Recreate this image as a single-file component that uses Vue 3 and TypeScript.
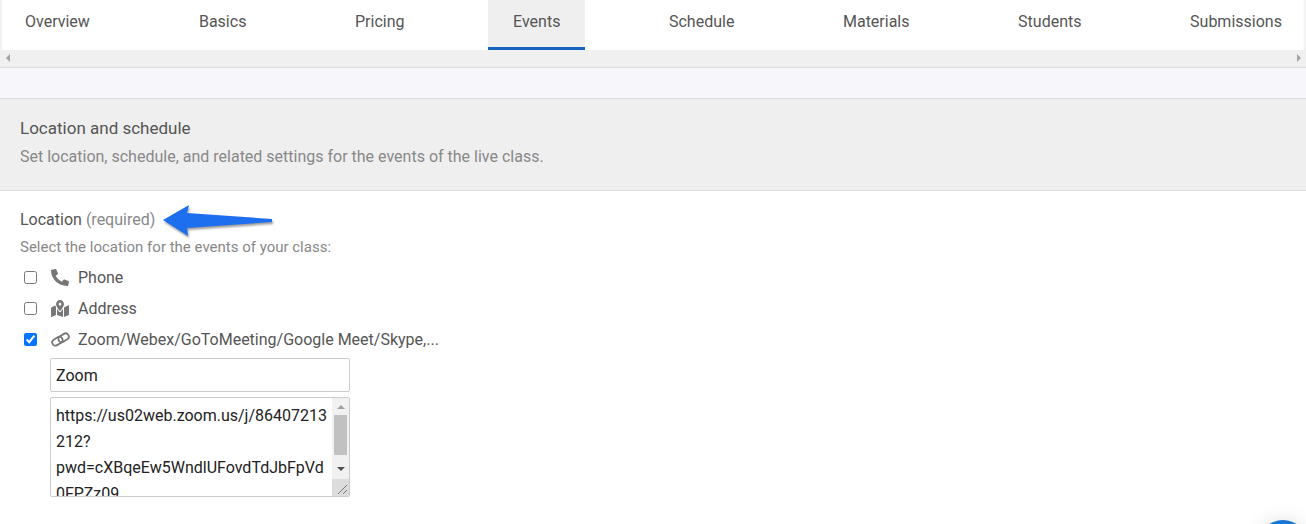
<script setup lang="ts">
import { ref } from 'vue'

const tabs = ['Overview', 'Basics', 'Pricing', 'Events', 'Schedule', 'Materials', 'Students', 'Submissions']
const activeTab = ref('Events')

const phonePath = 'M497.39 361.8l-112-48a24 24 0 0 0-28 6.9l-49.6 60.6A370.66 370.66 0 0 1 130.6 204.11l60.6-49.6a23.94 23.94 0 0 0 6.9-28l-48-112A24.16 24.16 0 0 0 122.6.61l-104 24A24 24 0 0 0 0 48c0 256.5 207.9 464 464 464a24 24 0 0 0 23.4-18.6l24-104a24.29 24.29 0 0 0-14.01-27.6z'
const mapPath = 'M288 0c-69.59 0-126 56.41-126 126 0 56.26 82.35 158.8 113.9 196.02 6.39 7.54 17.82 7.54 24.2 0C331.65 284.8 414 182.26 414 126 414 56.41 357.59 0 288 0zm0 168c-23.2 0-42-18.8-42-42s18.8-42 42-42 42 18.8 42 42-18.8 42-42 42zM20.12 215.95A32.006 32.006 0 0 0 0 245.66v250.32c0 11.32 11.43 19.06 21.94 14.86L160 448V214.92c-8.84-15.98-16.07-31.54-21.25-46.42L20.12 215.95zM288 359.67c-14.07 0-27.38-6.18-36.51-16.96-19.66-23.2-40.57-49.62-59.49-76.72V448l192 64V266c-18.92 27.09-39.82 53.52-59.49 76.72-9.13 10.77-22.44 16.95-36.51 16.95zm266.06-198.51L416 224v288l139.88-55.95A31.996 31.996 0 0 0 576 426.34V176.02c0-11.32-11.43-19.06-21.94-14.86z'

const locations = [
  { label: 'Phone', path: phonePath, box: '0 0 512 512', checked: false },
  { label: 'Address', path: mapPath, box: '0 0 576 512', checked: false },
  { label: 'Zoom/Webex/GoToMeeting/Google Meet/Skype,...', path: '', box: '0 0 19 15', checked: true },
]
</script>

<template>
  <div class="page">
    <nav class="tabs">
      <a v-for="tab in tabs" :key="tab" class="tab" :class="{ active: tab === activeTab }">{{ tab }}</a>
    </nav>
    <div class="strip-scroll">
      <span class="arrow-left"></span>
      <span class="arrow-right"></span>
    </div>
    <div class="band"></div>

    <header class="section-head">
      <h2>Location and schedule</h2>
      <p>Set location, schedule, and related settings for the events of the live class.</p>
    </header>

    <section class="form">
      <div class="label">Location <span class="req">(required)</span></div>
      <div class="hint">Select the location for the events of your class:</div>

      <label v-for="loc in locations" :key="loc.label" class="option">
        <input type="checkbox" :checked="loc.checked" />
        <svg class="icon" :viewBox="loc.box" preserveAspectRatio="none" aria-hidden="true">
          <path v-if="loc.path" :d="loc.path" />
          <g v-else class="chain">
            <rect x="0.9" y="6" width="11" height="6.4" rx="3.2" transform="rotate(-32 6.4 9.2)" />
            <rect x="7.1" y="2.6" width="11" height="6.4" rx="3.2" transform="rotate(-32 12.6 5.8)" />
          </g>
        </svg>
        <span>{{ loc.label }}</span>
      </label>

      <div class="fields">
        <div class="input">Zoom</div>
        <div class="textarea">
          <div class="ta-text">https://us02web.zoom.us/j/86407213<br />212?<br />pwd=cXBqeEw5WndlUFovdTdJbFpVd<br />0FPZz09</div>
          <div class="ta-scroll">
            <span class="up"></span>
            <span class="thumb"></span>
            <span class="down"></span>
            <span class="grip">
              <svg width="17" height="17" viewBox="0 0 17 17"><path d="M6 15L15 6M11 15L15 11" stroke="#777" fill="none" /></svg>
            </span>
          </div>
        </div>
      </div>
    </section>

    <svg class="callout" width="116" height="36" viewBox="0 0 116 36" aria-hidden="true">
      <path d="M3 17L29 2L27 10L112 16L112 19L27 25L28 33Z" />
    </svg>
    <div class="chat"></div>
  </div>
</template>

<style scoped>
.page {
  position: relative;
  width: 1306px;
  height: 524px;
  overflow: hidden;
  background: #fff;
  font-family: Roboto, "Liberation Sans", sans-serif;
  font-size: 16px;
}
.tabs {
  display: flex;
  justify-content: space-between;
  height: 50px;
  margin-right: -1px;
  background: #fff;
  box-shadow: inset 3px 0 2px -1px #f0f0f0, inset -4px 0 2px -1px #f0f0f0;
}
.tab {
  box-sizing: border-box;
  height: 50px;
  padding: 13px 25px 0;
  line-height: 18px;
  color: #555;
  white-space: nowrap;
}
.tab:first-child {
  padding-right: 25.5px;
}
.tab.active {
  background: #efefef;
  border-bottom: 3px solid #1565c0;
}
.strip-scroll {
  display: flex;
  justify-content: space-between;
  align-items: center;
  box-sizing: border-box;
  height: 18px;
  padding: 0 5px 2px 6px;
  background: #f0f0f0;
  border-bottom: 1px solid #dcdcdc;
}
.arrow-left {
  border: 4px solid transparent;
  border-left: 0;
  border-right: 4px solid #a3a3a3;
}
.arrow-right {
  border: 4px solid transparent;
  border-right: 0;
  border-left: 4px solid #a3a3a3;
}
.band {
  height: 30px;
  background: #f7f7fb;
}
.section-head {
  box-sizing: border-box;
  height: 93px;
  padding: 20px 20px 0;
  background: #efefef;
  border-top: 1px solid #dcdcdc;
  border-bottom: 1px solid #dcdcdc;
}
.section-head h2 {
  margin: 0;
  font-size: 17px;
  font-weight: 400;
  line-height: 19px;
  color: #555;
}
.section-head p {
  margin: 9px 0 0;
  font-size: 16px;
  line-height: 19px;
  color: #888;
}
.form {
  padding: 19px 20px 0;
}
.label {
  line-height: 19px;
  color: #555;
}
.req {
  color: #888;
}
.hint {
  margin-top: 9px;
  font-size: 15px;
  line-height: 18px;
  color: #888;
}
.option {
  display: flex;
  align-items: center;
  height: 31px;
  color: #555;
}
.option:first-of-type {
  margin-top: 6px;
}
.option input {
  width: 13px;
  height: 13px;
  margin: 0 14px 0 4px;
}
.icon {
  flex: none;
  width: 18px;
  height: 17px;
  margin-right: 9px;
  fill: #777;
}
.option:last-of-type .icon {
  width: 19px;
  height: 15px;
  margin-right: 8px;
}
.chain rect {
  fill: none;
  stroke: #777;
  stroke-width: 1.8;
}
.fields {
  display: flex;
  flex-direction: column;
  gap: 5px;
  width: 300px;
  margin: 3px 0 0 30px;
}
.input {
  box-sizing: border-box;
  height: 34px;
  padding: 0 5px;
  line-height: 34px;
  color: #222;
  border: 1px solid #ccc;
  border-radius: 2px;
}
.textarea {
  display: flex;
  box-sizing: border-box;
  height: 100px;
  overflow: hidden;
  color: #222;
  border: 1px solid #ccc;
  border-radius: 2px;
}
.ta-text {
  flex: 1;
  padding: 5px 5px 0;
  line-height: 26px;
  white-space: nowrap;
}
.ta-scroll {
  display: flex;
  flex-direction: column;
  align-items: center;
  width: 17px;
  background: #f1f1f1;
}
.up,
.down {
  flex: none;
  width: 0;
  height: 0;
  border-left: 4px solid transparent;
  border-right: 4px solid transparent;
}
.up {
  margin: 7px 0 6px;
  border-bottom: 4px solid #a3a3a3;
}
.down {
  margin: 12px 0 8px;
  border-top: 4px solid #505050;
}
.thumb {
  flex: none;
  width: 13px;
  height: 40px;
  background: #c1c1c1;
}
.grip {
  display: block;
  flex: none;
  width: 17px;
  height: 17px;
  background: #dcdcdc;
}
.callout {
  position: absolute;
  left: 160px;
  top: 203px;
  fill: #1e6ff0;
  filter: drop-shadow(1px 2px 1px rgba(0, 0, 0, 0.4));
}
.chat {
  position: absolute;
  left: 1258px;
  top: 520px;
  width: 50px;
  height: 50px;
  border-radius: 50%;
  background: #1976d2;
  box-shadow: 0 0 20px rgba(0, 0, 0, 0.12);
}
</style>

<style>
html,
body {
  margin: 0;
  overflow: hidden;
}
</style>
